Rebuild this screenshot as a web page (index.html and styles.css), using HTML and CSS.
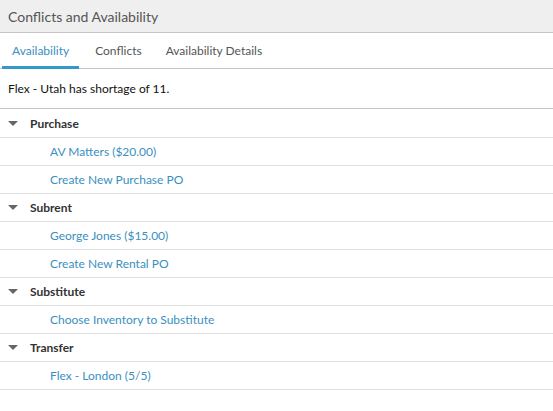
FILE: index.html
```html
<!DOCTYPE html>
<html>
<head>
<meta charset="utf-8">
<link rel="stylesheet" href="styles.css">
</head>
<body>
<div class="panel">
  <div class="header">Conflicts and Availability</div>
  <div class="tabs">
    <div class="tab active">Availability</div>
    <div class="tab">Conflicts</div>
    <div class="tab">Availability Details</div>
  </div>
  <div class="message">Flex - Utah has shortage of 11.</div>
  <div class="list">
    <div class="group"><span class="caret"></span>Purchase</div>
    <div class="item">AV Matters ($20.00)</div>
    <div class="item">Create New Purchase PO</div>
    <div class="group"><span class="caret"></span>Subrent</div>
    <div class="item">George Jones ($15.00)</div>
    <div class="item">Create New Rental PO</div>
    <div class="group"><span class="caret"></span>Substitute</div>
    <div class="item">Choose Inventory to Substitute</div>
    <div class="group"><span class="caret"></span>Transfer</div>
    <div class="item">Flex - London (5/5)</div>
  </div>
</div>
</body>
</html>
```
FILE: styles.css
```css
html, body {
  margin: 0;
  padding: 0;
  background: #fff;
}
body {
  font-family: Lato, "Open Sans", sans-serif;
  font-size: 12px;
}
.panel {
  width: 553px;
}
.header {
  height: 32px;
  background: #efefef;
  border-bottom: 1px solid #c4c4c4;
  display: flex;
  align-items: center;
  padding-left: 8px;
  font-size: 14px;
  color: #555;
}
.tabs {
  display: flex;
  height: 35px;
  padding-left: 2px;
  border-bottom: 1px solid #c4c4c4;
}
.tab {
  padding: 2px 10px 0;
  display: flex;
  align-items: center;
  color: #555;
  border-bottom: 3px solid transparent;
  margin-bottom: -1px;
}
.tab.active {
  color: #3a8fc0;
  border-bottom-color: #3399cc;
  margin-right: 2px;
}
.tab + .tab {
  padding-left: 14px;
  padding-right: 10px;
}
.message {
  height: 39px;
  display: flex;
  align-items: center;
  padding-left: 8px;
  color: #111;
  border-bottom: 1px solid #c4c4c4;
}
.list {
  padding-top: 1px;
}
.group, .item {
  height: 27px;
  border-bottom: 1px solid #e2e2e2;
  display: flex;
  align-items: center;
}
.group {
  font-weight: bold;
  color: #333;
  padding-left: 8px;
}
.caret {
  width: 0;
  height: 0;
  border-left: 5px solid transparent;
  border-right: 5px solid transparent;
  border-top: 5px solid #666;
  margin-right: 12px;
}
.item {
  padding-left: 50px;
  color: #3a8fc0;
}
```
